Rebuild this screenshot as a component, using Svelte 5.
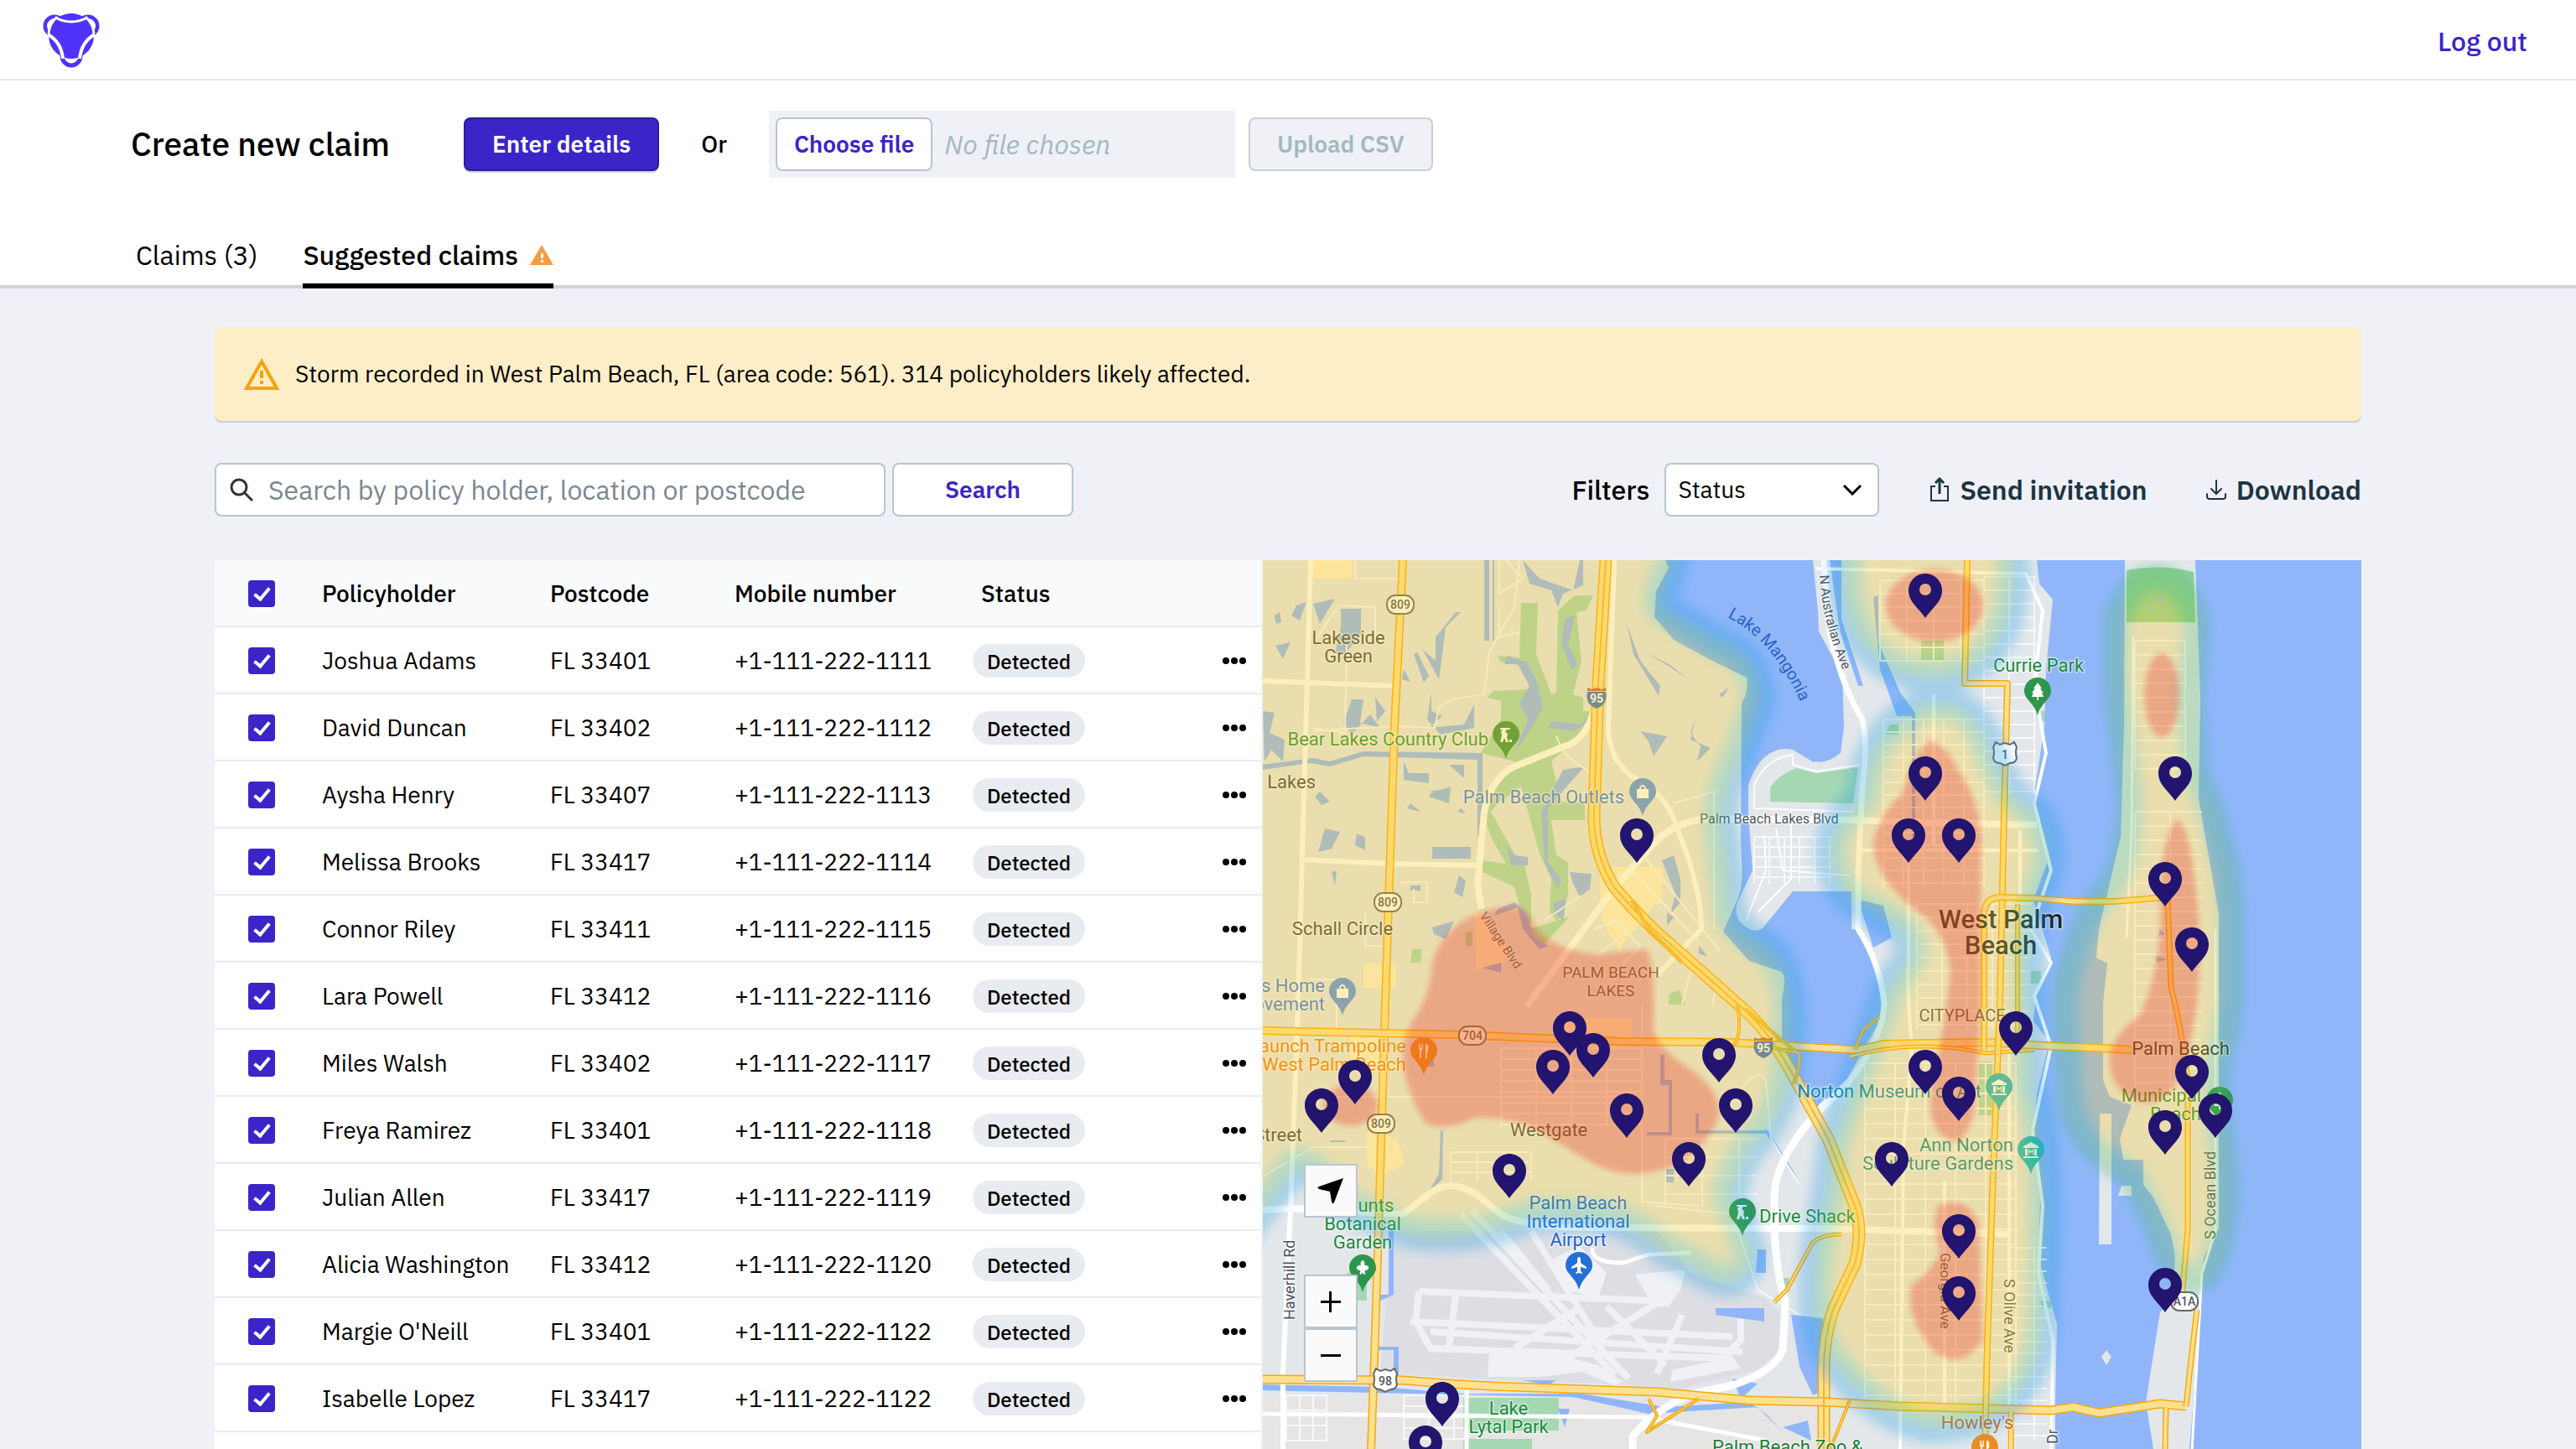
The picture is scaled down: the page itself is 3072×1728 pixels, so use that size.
<script>
  const names = [
    ["Joshua Adams", "FL 33401", "+1-111-222-1111"],
    ["David Duncan", "FL 33402", "+1-111-222-1112"],
    ["Aysha Henry", "FL 33407", "+1-111-222-1113"],
    ["Melissa Brooks", "FL 33417", "+1-111-222-1114"],
    ["Connor Riley", "FL 33411", "+1-111-222-1115"],
    ["Lara Powell", "FL 33412", "+1-111-222-1116"],
    ["Miles Walsh", "FL 33402", "+1-111-222-1117"],
    ["Freya Ramirez", "FL 33401", "+1-111-222-1118"],
    ["Julian Allen", "FL 33417", "+1-111-222-1119"],
    ["Alicia Washington", "FL 33412", "+1-111-222-1120"],
    ["Margie O'Neill", "FL 33401", "+1-111-222-1122"],
    ["Isabelle Lopez", "FL 33417", "+1-111-222-1122"],
  ];

  let rows = $state(
    names.map(([name, postcode, mobile]) => ({ name, postcode, mobile, checked: true }))
  );
  let allChecked = $derived(rows.every((row) => row.checked));
  let query = $state("");

  function toggleAll() {
    const next = !allChecked;
    rows.forEach((row) => (row.checked = next));
  }

  // policyholder pins: centre x, top y
  const pins = [
    [446, 308], [790, 16], [790, 234], [770, 308], [830, 308], [1088, 234],
    [1076, 360], [1108, 438], [366, 538], [394, 564], [346, 584], [544, 570],
    [564, 630], [434, 636], [508, 694], [294, 708], [110, 596], [70, 630],
    [214, 980], [194, 1032], [898, 538], [790, 584], [830, 616], [750, 694],
    [830, 780], [830, 854], [1108, 590], [1136, 636], [1076, 656], [1076, 844],
  ];

  // places of interest: centre x, top y, colour, glyph
  const places = [
    [290, 192, "#34913f", "golf"],
    [453, 260, "#5a92e8", "bag"],
    [95, 498, "#5a92e8", "bag"],
    [192, 569, "#f08c1d", "food"],
    [924, 140, "#2e964a", "tree"],
    [572, 761, "#2e964a", "golf"],
    [878, 612, "#1fb5c4", "museum"],
    [916, 687, "#1fb5c4", "museum"],
    [119, 828, "#2e964a", "flower"],
    [377, 825, "#256fd8", "plane"],
    [1141, 628, "#2e964a", "tree"],
    [861, 1042, "#f08c1d", "food"],
  ];

  const glyphs = {
    golf: "M9 8h12v2h-4l-2 2 3 4-1 3 2 6h-3l-2-5-2 5H9l2-8-1-5 2-2H9zM20 22h3v3h-3z",
    bag: "M9 13h14v11H9zM12 13a4 5 0 0 1 8 0h-2a2 3 0 0 0-4 0zM13 17h1a2 2 0 0 0 4 0h1a3 3 0 0 1-6 0z",
    food: "M10 8h1v5h1V8h1v5h1V8h1v6l-2 2v9h-2v-9l-1-2zM18 8c3 0 4 3 3 9h-1v8h-2z",
    tree: "M16 6l5 7h-2l4 5h-2l2 5h-6v4h-2v-4H9l2-5H9l4-5h-2z",
    museum: "M16 7l9 5v2H7v-2zM9 15h3v8H9zM20 15h3v8h-3zM7 24h18v2H7zM13 22v-7l3 3 3-3v7h-1v-4l-2 2-2-2v4z",
    flower: "M16 7a3 4 0 0 1 2 6 4 3 0 0 1 4 5 4 3 0 0 1-4 1 3 4 0 0 1 1 5 3 4 0 0 1-3-3 3 4 0 0 1-3 3 3 4 0 0 1 1-5 4 3 0 0 1-4-1 4 3 0 0 1 4-5 3 4 0 0 1 2-6z",
    plane: "M16 6c1 0 2 1 2 3v4l7 5v2l-7-2v5l2 2v1l-4-1-4 1v-1l2-2v-5l-7 2v-2l7-5V9c0-2 1-3 2-3z",
  };

  // place names: lines, anchor x, first baseline, anchor, colour, size
  const labels = [
    [["Lakeside", "Green"], 102, 100, "middle", "#3f454b", 22],
    [["Bear Lakes Country Club"], 269, 221, "end", "#27903a", 22],
    [["s Lakes"], 63, 272, "end", "#3f454b", 22],
    [["Palm Beach Outlets"], 431, 290, "end", "#3a7be0", 22],
    [["Palm Beach Lakes Blvd"], 521, 314, "start", "#50565c", 16],
    [["Schall Circle"], 95, 447, "middle", "#3f454b", 22],
    [["PALM BEACH", "LAKES"], 415, 498, "middle", "#5a5652", 19],
    [["s Home", "ovement"], 74, 515, "end", "#3a7be0", 22],
    [["aunch Trampoline", "West Palm Beach"], 171, 587, "end", "#ee7c12", 22],
    [["Westgate"], 341, 687, "middle", "#3f454b", 22],
    [["Street"], 47, 693, "end", "#3f454b", 22],
    [["Mounts", "Botanical", "Garden"], 119, 777, "middle", "#208a3d", 22],
    [["Palm Beach", "International", "Airport"], 376, 774, "middle", "#1f62d6", 22],
    [["Drive Shack"], 592, 790, "start", "#208a3d", 22],
    [["Lake", "Lytal Park"], 293, 1019, "middle", "#208a3d", 22],
    [["Palm Beach Zoo &"], 536, 1065, "start", "#188038", 22],
    [["Currie Park"], 925, 133, "middle", "#208a3d", 22],
    [["CITYPLACE"], 834, 550, "middle", "#50504a", 20],
    [["Norton Museum of Art"], 857, 641, "end", "#1086ae", 22],
    [["Ann Norton", "Sculpture Gardens"], 895, 705, "end", "#10889a", 22],
    [["Palm Beach"], 1153, 590, "end", "#25292d", 22],
    [["Municipal", "Beach"], 1119, 646, "end", "#208a3d", 22],
    [["Howley's"], 852, 1036, "middle", "#d96a18", 22],
  ];

  const cityLabel = ["West Palm", "Beach"];

  // street names that run along their road
  const streets = [
    ["Haverhill Rd", 38, 906, -90, 18],
    ["Village Blvd", 258, 424, 56, 15],
    ["S Ocean Blvd", 1136, 810, -90, 18],
    ["Georgia Ave", 808, 826, 90, 17],
    ["S Olive Ave", 884, 857, 90, 18],
    ["Dr", 948, 1054, -90, 18],
  ];

  const ovals = [
    ["809", 164, 54], ["809", 149, 409], ["809", 141, 673], ["704", 250, 568], ["A1A", 1099, 885],
  ];
  const crests = [["1", 885, 231], ["98", 146, 978]];
  const interstates = [[398, 164], [597, 581]];

  // yellow highways: path and width
  const highways = [
    ["M167 0 157 199 146 529 139 763 133 952 129 1062", 10],
    ["M409 0 400 147 395 302Q394 350 419 390 440 415 470 444L566 529Q600 556 630 610L674 690 706 770Q716 800 706 839L680 894Q668 930 669 970V1062", 15],
    ["M0 561 233 566 428 574 558 575 674 582 710 584 741 577 862 575 932 579 1001 582 1036 584", 10],
    ["M700 592Q780 570 862 588L920 584", 5],
    ["M0 977 167 978Q240 984 298 986L471 992 580 1002 674 1004 758 1009 940 1014 966 1010 997 1017 1070 1006 1101 1009", 11],
    ["M840 0 837 147H888L884 302 879 529 871 729 864 935 861 1062", 8],
    ["M860 584V420Q862 402 880 402L919 403 966 407 1014 407 1077 402", 8],
    ["M900 410V584", 6],
    ["M1079 405 1083 509Q1096 560 1103 620L1103 797 1096 880", 7],
    ["M1114 894 1107 952 1101 1009M1077 1011 1076 1062", 7],
    ["M892 1015V1062", 7],
    ["M610 885 625 870 655 815Q665 804 690 804", 5],
    ["M566 529Q572 570 560 580M575 535 640 590Q640 610 632 625M600 580 640 588", 4],
    ["M460 1000 470 1020 458 1040 520 1000M700 1002 676 1062M706 584 716 560 735 545M440 405 460 440 500 480", 4],
  ];

  const avenues = [
    ["M57 0 42 529 33 773 24 970V1062", 6],
    ["M0 144 157 150M46 357 150 362 258 364", 6],
    ["M395 178Q385 215 360 222L300 246Q272 260 264 300L256 388 261 416", 8],
    ["M315 532 419 391 471 333Q490 315 523 309H674L760 312 923 316", 8],
    ["M419 0 412 199Q412 236 440 258 484 280 494 320 523 390 523 440L471 494", 6],
    ["M0 775 33 773 167 780 198 756Q222 736 254 756L284 780Q310 796 400 796L610 797H674L888 804", 8],
    ["M674 645Q610 710 610 760V797Q612 850 623 884L620 942Q610 968 560 984L514 994Q470 1010 441 1045V1062", 9],
    ["M669 0 676 85Q690 150 715 190 722 220 715 268L710 371V440Q736 480 741 529 740 570 697 625L654 667", 7],
    ["M0 1018 454 1022 600 1050M243 990V1062", 5],
    ["M393 820Q390 838 430 838L460 828 510 826", 5],
    ["M770 360V480Q768 520 774 580L764 700 760 1062M813 740V1010M890 540V1062", 4],
    ["M800 160V340M710 346H925M903 322V402", 4],
    ["M660 10 860 15 910 16 930 60 920 150 934 230 920 290 940 370 916 440 940 480 920 520 940 580 918 680 930 770 925 850 942 930 940 1062", 4],
    ["M1136 440V800L1120 850 1108 1062M1038 90 1036 320 1030 450", 3],
  ];

  // thin residential streets, drawn as evenly spaced runs
  function grid(x1, x2, y1, y2, dx, dy) {
    let d = "";
    for (let y = y1; y <= y2; y += dy) d += `M${x1} ${y}H${x2}`;
    for (let x = x1; x <= x2; x += dx) d += `M${x} ${y1}V${y2}`;
    return d;
  }
  const lanes = [
    grid(284, 452, 582, 676, 42, 13),
    grid(224, 320, 706, 740, 32, 12),
    grid(480, 590, 690, 770, 44, 22),
    grid(736, 860, 24, 120, 32, 16),
    grid(740, 860, 190, 390, 24, 15),
    grid(780, 915, 410, 560, 30, 16),
    grid(718, 900, 600, 1010, 36, 18),
    grid(860, 922, 20, 280, 30, 16),
    grid(1040, 1100, 96, 250, 60, 17),
    grid(1040, 1120, 300, 640, 42, 17),
    grid(890, 935, 820, 1050, 30, 14),
    grid(168, 243, 996, 1050, 30, 13),
    grid(28, 76, 996, 1050, 16, 18),
    grid(586, 680, 330, 386, 18, 12),
    "M60 100 90 54 134 56V96M110 0V22H166M282 0V40L310 22 290 0M282 55V92L306 86M60 200 98 206 100 100M60 204Q160 196 205 200L210 176 225 166 264 160 270 110 300 56 306 0",
    "M164 384H196V408H180V392M122 420V460H142M55 500H88V560M335 430 350 420 380 400M395 440 420 430 450 460 430 480M400 470 440 440",
    "M350 210Q360 240 395 254M440 370 520 455M452 350 545 466M490 290 538 276V440M500 530 510 490 540 510 536 532M555 650Q590 600 600 620L606 690 640 745",
    "M452 530V765L520 770M90 640H440M60 700H130M0 735 60 700M470 770 560 780 590 870 640 900",
  ];

  // small lakes and canals inland
  const ponds = [
    "M93 58H117V88L98 112H86L93 80zM40 54 52 50 44 72 34 66zM15 102 33 98 24 118zM60 52 86 46 68 76zM14 66 20 62 22 74 16 76z",
    "M230 62 206 92V120L190 106 210 142 214 112 218 80 236 62zM180 112 192 146 198 138 184 110zM166 142 176 145 168 130z",
    "M106 166H120L116 194 140 200 128 184 106 208 96 194zM134 164 146 180 136 192zM201 158V180L214 186 198 200 240 196 252 172V200L212 208 196 190z",
    "M0 180 14 182 8 206 26 214 24 240 10 226 2 240zM168 240 174 254H198V266L168 262zM222 244H240V260zM200 278 224 270 222 290 198 282zM176 290 188 300 172 296z",
    "M0 244 60 236 80 240 120 228 262 230V330H256V238L120 234 80 246 56 242 0 250z",
    "M310 0 330 22 370 36 378 0H382V30L358 40 352 56 344 36 318 28zM270 0V96H264V0zM276 0V96H274V0z",
    "M292 114 316 122 328 148 334 176 320 200 300 230 316 190 306 170 318 150 304 124 288 124z",
    "M360 70 372 66 364 100 376 126 368 130 356 100zM346 192 380 196 392 180 396 190 370 204 340 200z",
    "M391 190H396V290H391zM358 250 384 246 366 266 340 296 340 360 356 380 352 392 336 360 332 300zM290 340 300 352 316 354V364H296z",
    "M434 76 450 120 474 150 472 162 442 112zM456 110 480 124 508 142 484 124zM450 204 482 210 466 234 460 216zM516 188 510 214 534 224 518 240 522 222 510 206zM544 160 556 152 548 164z",
    "M202 342H248V356H202zM74 320 92 324 82 344 66 348zM112 326 122 330V346L110 340zM82 372 88 370 86 388zM62 282 68 276 80 288 70 292z",
    "M176 388H188V394H176zM234 376 242 382 238 402 228 396zM202 438 228 430 218 452 204 446zM232 300 242 302 236 296zM198 276 222 272V288L208 278z",
    "M476 358 490 352 498 380V408L486 422 492 398zM482 420 490 426 482 436zM520 460 530 472 520 470zM366 372 392 374 390 392 378 402 370 386z",
    "M280 416 300 408 314 420 324 450 340 460 330 464 310 440 304 414 276 424zM262 486 284 480V492zM346 408 362 404 358 430 348 420z",
    "M195 590H204V604H195zM474 590H479V620H488V686H458V682H484V626H474zM516 660H520V680H602L640 740 600 684H516zM80 692H98V694H80zM502 722H524V730H502zM480 726H490V742H480zM215 680 214 738 196 756 210 732 212 680z",
    "M540 892H598V908L540 900zM590 822H600V850H588zM135 938H162V976H156V942H135zM150 800H156V876L138 884V876H150zM630 900 668 904V990L656 996 640 962zM310 978 350 978 340 984zM352 1012H366L360 1034zM560 976 590 982 570 1000zM620 1034 650 1026 654 1050z",
    "M0 983 140 986 240 994 380 994 480 1010 580 1004 600 1018 620 1040 590 1010 460 1018 370 998 0 990z",
    "M1070 440 1076 446 1068 448zM1066 472 1078 476 1066 480zM1062 46 1074 44 1070 50zM1056 52 1064 60 1058 58zM728 44 734 42V98L760 158 778 182V330H774V186H756L736 130zM676 0H690V70L716 150H710L688 84z",
  ];

  const parks = [
    "M308 51H328L326 112 344 160 350 158 352 60 372 42H394L386 60 374 62 380 120 370 160 382 164V180H396L380 208 344 240 356 288 384 290V310H344L350 352 364 360V400L352 432 342 420 344 380 330 350 308 270 280 290 272 300 300 350 312 362 320 400V434L308 420 300 390 262 372V358L290 362 272 330 262 300 276 270 300 240 260 230 284 190V168L268 164 274 156 318 154 312 126 284 122 280 114 306 116z",
    "M318 440 366 425 330 464 312 440zM178 464H190L188 480H176zM242 443H250V460H242zM484 518 496 512 504 530H484z",
    "M605 288V272Q612 258 636 248L660 254 710 247 704 290z",
    "M748 196H758V208H742zM785 96H812V119H785zM922 180H934V192L926 194zM916 490H928V505H916z",
    "M239 999H353V1038H239zM239 1048H321V1062H239zM100 850H124V883H100zM620 856H628V872H620z",
    "M1053 984H1101L1098 1008H1050zM980 1022 1000 1020 1008 1062H990zM1012 1032 1024 1062H1018zM1000 568H1008V640H1000zM1002 568H1036V576H1002zM854 598H870V662H854zM928 883H940V892H928z",
  ];

  // storm footprint: core outline, outer halo width, inner halo width
  const heat = [
    ["M-40-30H478L455 37Q448 62 474 80L536 117Q576 130 570 171L546 233Q516 290 530 350L538 430Q550 454 590 480 612 500 608 560 610 640 576 675 544 710 536 760L560 826Q560 842 548 838L490 806Q440 762 384 762 330 758 300 768 240 792 180 782L111 752 72 712Q40 690 20 712L-40 790z", 80, 44],
    ["M714-30H874V20Q870 118 797 119 722 112 714 30z", 80, 40],
    ["M797 190Q832 186 846 224 866 290 905 312 930 345 904 400 890 430 894 529L897 630Q916 700 914 797L910 918Q900 1010 797 1014 740 1004 689 936 664 880 692 763L700 694 762 522 790 480Q800 450 768 420L716 392Q680 350 710 316 738 290 736 270 744 214 797 190z", 78, 36],
    ["M1066 36Q1094 44 1098 80L1090 160 1096 261Q1114 290 1122 330 1140 380 1138 440V529L1120 620 1128 700Q1140 800 1112 842 1094 836 1086 800L1050 722Q984 690 979 643L972 529Q980 450 1030 388 1056 340 1046 250L1034 147V70Q1046 40 1066 36z", 56, 60],
  ];

  const hotspots = [
    "M298 412Q318 416 324 436 346 466 400 470L456 464Q468 470 466 560 470 580 500 600 560 640 538 676 510 730 440 732 410 730 384 714L341 688Q310 664 254 665 218 682 194 672 150 600 178 550 200 520 202 480 220 420 298 412z",
    "M72 652A32 24 0 1 0 137 648 32 24 0 1 0 72 652z",
    "M743 54A58 43 0 1 0 859 54 58 43 0 1 0 743 54z",
    "M797 216Q816 222 827 247 864 300 856 360V529L848 660Q836 700 820 692 790 680 798 630 812 560 820 491 816 450 790 426 726 380 728 336 736 300 762 280 776 224 797 216z",
    "M805 770Q840 756 854 790L858 930Q834 968 800 944 764 900 774 864 796 850 808 825 796 790 805 770z",
    "M1051 161A21 50 0 1 0 1093 161 21 50 0 1 0 1051 161z",
    "M1091 309Q1108 320 1116 430 1122 520 1100 600 1080 660 1040 644 1008 630 1010 590 1014 566 1046 543 1074 480 1070 400 1074 320 1091 309z",
  ];
</script>

<div class="page">
  <header class="topbar">
    <a class="brand" href="/" aria-label="Home">
      <svg viewBox="0 0 68 66" aria-hidden="true">
        <g fill="none" stroke="#4f33fb" stroke-width="5">
          <circle cx="14" cy="15" r="11" />
          <circle cx="54" cy="15" r="11" />
          <circle cx="34" cy="51" r="11" />
        </g>
        <circle cx="14" cy="15" r="9" fill="#fff" />
        <circle cx="54" cy="15" r="9" fill="#fff" />
        <path
          d="M34 0C44 0 52 5 56 12 61 20 62 30 59 37 55 47 45 54 34 54S13 47 9 37C6 30 7 20 12 12 16 5 24 0 34 0z"
          fill="#4f33fb"
        />
        <g fill="none" stroke="#fff" stroke-width="4">
          <path d="M15 5Q34 15 53 5" stroke-width="3" />
          <path d="M6 25Q22 34 24 54" />
          <path d="M62 25Q46 34 44 54" />
          <path d="M17 4Q8 12 7 24M51 4Q60 12 61 24" stroke-width="3" />
        </g>
      </svg>
    </a>
    <a class="logout" href="/logout">Log out</a>
  </header>

  <section class="create">
    <h1>Create new claim</h1>
    <button class="btn primary">Enter details</button>
    <span class="or">Or</span>
    <div class="file">
      <input id="csv" class="sr-only" type="file" accept=".csv" />
      <label class="btn" for="csv">Choose file</label>
      <span class="file-name">No file chosen</span>
    </div>
    <button class="btn upload" disabled>Upload CSV</button>
  </section>

  <nav class="tabs">
    <a href="#claims">Claims (3)</a>
    <a class="active" href="#suggested" aria-current="page">
      Suggested claims
      <svg viewBox="0 0 28 24" aria-hidden="true">
        <path d="M14 0 28 24H0z" fill="#f59b42" />
        <path d="M13 10h3v6h-3zM13 18h3v3h-3z" fill="#fff" />
      </svg>
    </a>
  </nav>

  <main>
    <div class="banner" role="status">
      <svg viewBox="0 0 44 38" aria-hidden="true">
        <path d="M22 4 40 36H4z" fill="none" stroke="#f5a30c" stroke-width="4" />
        <path d="M20 15h4v9h-4zM20 27h4v4h-4z" fill="#f5a30c" />
      </svg>
      <p>Storm recorded in West Palm Beach, FL (area code: 561). 314 policyholders likely affected.</p>
    </div>

    <div class="toolbar">
      <form class="search" onsubmit={(e) => e.preventDefault()}>
        <div class="search-box">
          <svg viewBox="0 0 28 28" aria-hidden="true">
            <circle cx="11" cy="11" r="9" fill="none" stroke="#333" stroke-width="3" />
            <path d="m18 18 9 9" stroke="#333" stroke-width="3" />
          </svg>
          <input
            type="text"
            aria-label="Search"
            placeholder="Search by policy holder, location or postcode"
            bind:value={query}
          />
        </div>
        <button class="btn">Search</button>
      </form>

      <div class="actions">
        <label for="status">Filters</label>
        <div class="select">
          <select id="status">
            <option>Status</option>
            <option>Detected</option>
          </select>
          <svg viewBox="0 0 24 14" aria-hidden="true">
            <path d="m2 2 10 10L22 2" fill="none" stroke="#000" stroke-width="3" />
          </svg>
        </div>
        <button class="link">
          <svg viewBox="0 0 24 30" aria-hidden="true">
            <g fill="none" stroke="#1d3444" stroke-width="2">
              <path d="M7 11H2v17h20V11h-5" />
              <path d="M12 20V3M7 7l5-5 5 5" stroke-width="3" />
            </g>
          </svg>
          Send invitation
        </button>
        <button class="link">
          <svg viewBox="0 0 24 30" aria-hidden="true">
            <g fill="none" stroke="#1d3444" stroke-width="2" stroke-linecap="round">
              <path d="M1 20v3q0 3 3 3h16q3 0 3-3v-3" />
              <path d="M12 4v16M6 14l6 6 6-6" />
            </g>
          </svg>
          Download
        </button>
      </div>
    </div>

    <div class="workspace">
      <div class="list">
        <table>
          <colgroup>
            <col class="c-check" />
            <col class="c-name" />
            <col class="c-post" />
            <col class="c-mobile" />
            <col />
            <col class="c-menu" />
          </colgroup>
          <thead>
            <tr>
              <th class="check">
                <input type="checkbox" aria-label="Select all" checked={allChecked} onchange={toggleAll} />
              </th>
              <th>Policyholder</th>
              <th>Postcode</th>
              <th>Mobile number</th>
              <th class="status">Status</th>
              <th></th>
            </tr>
          </thead>
          <tbody>
            {#each rows as row}
              <tr>
                <td class="check">
                  <input type="checkbox" aria-label={row.name} bind:checked={row.checked} />
                </td>
                <td>{row.name}</td>
                <td>{row.postcode}</td>
                <td>{row.mobile}</td>
                <td><span class="pill">Detected</span></td>
                <td>
                  <button class="more" aria-label="More actions">
                    <svg viewBox="0 0 28 8" aria-hidden="true">
                      <circle cx="4" cy="4" r="4" /><circle cx="14" cy="4" r="4" /><circle cx="24" cy="4" r="4" />
                    </svg>
                  </button>
                </td>
              </tr>
            {/each}
          </tbody>
        </table>
      </div>

      <div class="map">
        <svg class="canvas" viewBox="0 0 1310 1060" preserveAspectRatio="xMinYMin slice">
          <defs>
            <filter id="soft" x="-20%" y="-20%" width="140%" height="140%">
              <feGaussianBlur stdDeviation="7" />
            </filter>
            <filter id="edge" x="-20%" y="-20%" width="140%" height="140%">
              <feGaussianBlur stdDeviation="3" />
            </filter>
            <path id="mangonia" d="M554 68Q614 98 648 186" />
            <path id="australian" d="M664 18Q667 80 700 150" />
          </defs>

          <rect width="1310" height="1060" fill="#e3e7ea" />
          <path d="M0 1000H680V1060H0z" fill="#e6e5e4" />
          <path
            d="M154 800H400L470 800 510 850 601 880 618 900 616 942 590 965 500 988 428 983 300 978 140 970z"
            fill="#dddee3"
          />

          <!-- airport runways and aprons -->
          <g fill="none" stroke="#f0f1f4" stroke-width="8">
            <path d="M176 908 560 926M186 872 484 884M186 872 182 908 200 940 560 952M200 920 572 944" />
            <path d="M236 780 420 972M250 776 300 830 436 976M284 800 340 870M320 800 400 930" />
            <path d="M350 960 480 880M300 940 380 890M470 970 500 900M540 960 570 930V905M230 876 222 940M410 890 480 960" />
          </g>
          <g fill="#f0f1f4">
            <path d="M340 836 378 818 410 850 400 880 360 870zM444 852 504 846 498 870 484 890H466zM270 944H340L400 960 430 980 420 984 380 968 330 974H268zM488 966 560 950 570 964 486 980z" />
          </g>

          <g fill="#fdf1cf">
            <path d="M403 366H477L476 410 440 410 426 470 402 410zM120 481H160L158 510H120z" />
            <path d="M404 370H476V400L424 464 404 430zM104 560H150V605H104zM124 680 160 690 170 720 140 735 124 720zM60 0H106V22H60z" />
            <path d="M358 546H440V580H358zM253 418 290 460V480L254 488zM1010 412H1044L1036 438H1004z" />
          </g>

          {#each parks as d}
            <path {d} fill="#a5d7b3" />
          {/each}

          <!-- Lake Mangonia and Clear Lake -->
          <path
            class="water"
            d="M480 0H656L662 61 663 85 691 137 693 199 689 230Q680 244 658 240L700 300 702 395V440L708 440 726 474 741 529 732 556 697 618 654 660 632 625 619 580V522Q625 500 619 491L580 478 549 443 566 405Q574 390 570 340L571 171Q580 155 577 140L536 120 490 95 467 68 469 37 484 9z"
          />
          <path
            d="M579 302V268Q588 242 601 233 616 222 632 226L655 240Q672 244 689 230L700 224 716 250 712 395H632L595 440Q582 446 568 430 562 420 566 408L584 370z"
            fill="#e3e7ea"
          />
          <path d="M605 288V272Q612 258 636 248L660 254 710 247 704 290z" fill="#a5d7b3" />
          <path
            d="M586 296V268Q600 236 632 232V244L660 252 712 244M586 296 705 300M598 328 600 370 576 430M612 320 620 370 700 376M630 296V380L590 420"
            fill="none"
            stroke="#fff"
            stroke-width="2"
          />
          <path class="water" d="M710 405 740 412 750 450 728 462z" />

          <!-- Lake Worth lagoon and the ocean -->
          <path
            class="water"
            d="M923 0 926 28 942 47 934 130 932 199 919 285 938 354 919 405 940 474 923 509 919 550 938 574 923 636 919 684 927 763 925 832 947 911 945 1004V1060H1310V0z"
          />
          <path
            d="M1028 0H1112L1118 164 1116 285 1140 422V797L1122 832 1114 952 1105 1060H1062L1053 1004 1070 897 1085 880 1088 830 1083 804 1062 760 1050 745V715H1026L1022 690 1036 650 1010 640 1002 620V529L1007 481 994 474 997 440 1023 330 1027 199z"
            fill="#e3e7ea"
          />
          <path d="M1030 12Q1072 4 1110 14L1112 74H1030z" fill="#90d196" />
          <path d="M998 660H1012V816H997zM1024 746H1036V758H1020zM1006 942 1012 950 1006 960 1000 950z" fill="#e3e7ea" />

          {#each ponds as d}
            <path class="water" {d} />
          {/each}

          {#each lanes as d}
            <path {d} fill="none" stroke="#f7f9fa" stroke-width="2" />
          {/each}
          {#each avenues as [d, width]}
            <path {d} fill="none" stroke="#fff" stroke-width={width} stroke-linejoin="round" />
          {/each}
          {#each highways as [d, width]}
            <path {d} fill="none" stroke="#f7a80d" stroke-width={width} stroke-linejoin="round" />
            <path {d} fill="none" stroke="#ffe08f" stroke-width={width - 3} stroke-linejoin="round" />
          {/each}
          <path d={highways[1][0]} fill="none" stroke="#f9b52e" stroke-width="2" />

          {#each ovals as [text, x, y]}
            <rect x={x - 16} y={y - 12} width="32" height="22" rx="10" fill="#fff" stroke="#666" stroke-width="2" />
            <text class="shield" {x} y={y + 4}>{text}</text>
          {/each}
          {#each crests as [text, x, y]}
            <path
              transform="translate({x - 14} {y - 14})"
              d="M3 0 8 3 14 1 20 3 25 0 28 6Q26 12 28 19 27 25 20 25L14 28 8 25Q1 25 0 19 2 12 0 6z"
              fill="#fff"
              stroke="#666"
              stroke-width="2"
            />
            <text class="shield" {x} y={y + 6}>{text}</text>
          {/each}
          {#each interstates as [x, y]}
            <path transform="translate({x - 12} {y - 12})" d="M1 5H23Q26 20 12 25-2 20 1 5z" fill="#3d70bb" />
            <path transform="translate({x - 12} {y - 12})" d="M1 0 6 2 12 0 18 2 23 0V4H1z" fill="#d9593f" />
            <text class="shield light" {x} y={y + 6}>95</text>
          {/each}

          {#each places as [x, y, color, glyph]}
            <g transform="translate({x - 16} {y})">
              <path d="M16 0C25 0 32 7 32 16 32 26 20 30 16 45 12 30 0 26 0 16 0 7 7 0 16 0z" fill={color} />
              <path d={glyphs[glyph]} fill="#fff" />
            </g>
          {/each}

          {#each labels as [lines, x, y, anchor, color, size]}
            <text class="label" text-anchor={anchor} fill={color} font-size={size}>
              {#each lines as line, i}
                <tspan {x} y={y + i * 22}>{line}</tspan>
              {/each}
            </text>
          {/each}
          <text class="label city" text-anchor="middle">
            {#each cityLabel as line, i}
              <tspan x="880" y={439 + i * 31}>{line}</tspan>
            {/each}
          </text>
          {#each streets as [text, x, y, angle, size]}
            <text class="label" font-size={size} fill="#50565c" transform="translate({x} {y}) rotate({angle})">{text}</text>
          {/each}
          <text class="label lake"><textPath href="#mangonia">Lake Mangonia</textPath></text>
          <text class="label" font-size="16" fill="#50565c"><textPath href="#australian">N Australian Ave</textPath></text>

          <!-- storm intensity -->
          <g opacity="0.3" stroke-linejoin="round">
            <g filter="url(#soft)">
              {#each heat as [d, outer]}
                <path {d} fill="#1b9be6" stroke="#1b9be6" stroke-width={outer} />
              {/each}
            </g>
            <g filter="url(#soft)">
              {#each heat as [d, , inner]}
                <path {d} fill="#5ebe5f" stroke="#5ebe5f" stroke-width={inner} />
              {/each}
            </g>
            <g filter="url(#soft)">
              {#each heat as [d]}
                <path {d} fill="#fbcb28" />
              {/each}
            </g>
          </g>
          <g opacity="0.26" filter="url(#edge)">
            {#each hotspots as d}
              <path {d} fill="#eb1010" />
            {/each}
          </g>

          {#each pins as [x, y]}
            <path
              transform="translate({x - 20} {y})"
              d="M20 0C31 0 40 9 40 20 40 34 28 41 20 53 12 41 0 34 0 20 0 9 9 0 20 0zM20 12a7 7 0 1 0 0 14 7 7 0 0 0 0-14z"
              fill="#22146f"
            />
          {/each}
        </svg>

        <div class="controls">
          <button aria-label="Locate me">
            <svg viewBox="0 0 32 32" aria-hidden="true"><path d="M31 1 20 30Q18 33 17 29L15 17 2 14Q-1 12 2 11z" /></svg>
          </button>
          <div class="zoom">
            <button aria-label="Zoom in">
              <svg viewBox="0 0 32 32" aria-hidden="true"><path d="M14 4h3v11h11v3H17v11h-3V18H4v-3h10z" /></svg>
            </button>
            <button aria-label="Zoom out">
              <svg viewBox="0 0 32 32" aria-hidden="true"><path d="M4 15h24v3H4z" /></svg>
            </button>
          </div>
        </div>
      </div>
    </div>
  </main>
</div>

<style>
  :global(body) {
    margin: 0;
    background: #eff1f6;
  }

  .page {
    display: flex;
    flex-direction: column;
    min-height: 100vh;
    font-family: "IBM Plex Sans", Inter, "Noto Sans", sans-serif;
    font-size: 28px;
    line-height: 40px;
    color: #000;
  }

  a {
    color: inherit;
    text-decoration: none;
  }

  .topbar {
    display: flex;
    align-items: center;
    justify-content: space-between;
    box-sizing: border-box;
    height: 96px;
    padding: 4px 58px 0 51px;
    background: #fff;
    border-bottom: 2px solid #e6e6e6;
  }

  .brand svg {
    display: block;
    width: 68px;
    height: 66px;
  }

  .logout {
    font-size: 32px;
    font-weight: 500;
    color: #3b25c8;
  }

  .create {
    display: flex;
    align-items: center;
    padding: 36px 156px;
    background: #fff;
  }

  h1 {
    margin: 0 88px 0 0;
    font-size: 39px;
    font-weight: 500;
  }

  .btn {
    box-sizing: border-box;
    height: 64px;
    padding: 0 32px;
    border: 2px solid #b9c5cf;
    border-radius: 8px;
    background: #fff;
    color: #3b25c8;
    font: inherit;
    font-weight: 600;
    line-height: 60px;
    text-align: center;
    white-space: nowrap;
  }

  .primary {
    background: #3b25c8;
    border-color: #2c1f8f;
    box-shadow: 0 2px 0 #cfd6df;
    color: #fff;
  }

  .or {
    margin: 0 50px;
    font-weight: 500;
  }

  .file {
    display: flex;
    align-items: center;
    gap: 14px;
    box-sizing: border-box;
    width: 556px;
    height: 80px;
    padding: 0 8px;
    margin-right: 16px;
    background: #eff1f6;
  }

  .file .btn {
    padding: 0 20px;
  }

  .file-name {
    font-size: 32px;
    font-style: italic;
    color: #a3b8c1;
  }

  .upload {
    background: #eff1f6;
    border-color: #c9ced3;
    color: #a3b8c1;
  }

  .sr-only {
    position: absolute;
    width: 1px;
    height: 1px;
    opacity: 0;
  }

  .tabs {
    display: flex;
    gap: 54px;
    height: 92px;
    padding: 0 162px;
    background: #fff;
    border-bottom: 4px solid #cbd3da;
    font-size: 32px;
  }

  .tabs a {
    display: flex;
    align-items: center;
    gap: 14px;
    height: 68px;
    padding-top: 22px;
    border-bottom: 6px solid transparent;
  }

  .tabs .active {
    border-color: #000;
    font-weight: 500;
  }

  .tabs svg {
    width: 28px;
    height: 24px;
  }

  main {
    display: flex;
    flex: 1;
    flex-direction: column;
    padding: 46px 256px 0;
    background: #eff1f6;
  }

  .banner {
    display: flex;
    align-items: center;
    gap: 18px;
    height: 112px;
    padding: 0 34px;
    border-radius: 8px;
    background: #feeec7;
    box-shadow: 0 2px 0 #c9cdd0;
  }

  .banner svg {
    width: 44px;
    height: 38px;
  }

  .banner p {
    margin: 0;
  }

  .toolbar {
    display: flex;
    align-items: center;
    justify-content: space-between;
    padding: 50px 0 52px;
  }

  .search {
    display: flex;
    gap: 8px;
  }

  .search .btn {
    width: 216px;
  }

  .search-box {
    display: flex;
    align-items: center;
    gap: 18px;
    box-sizing: border-box;
    width: 800px;
    height: 64px;
    padding: 0 16px;
    border: 2px solid #b9c5cf;
    border-radius: 8px;
    background: #fff;
  }

  .search-box svg {
    flex: none;
    width: 28px;
    height: 28px;
  }

  .search-box input {
    flex: 1;
    min-width: 0;
    padding: 0;
    border: 0;
    outline: 0;
    font: inherit;
    font-size: 32px;
  }

  .search-box input::placeholder {
    color: #7b8794;
    opacity: 1;
  }

  .actions {
    display: flex;
    align-items: center;
    font-size: 32px;
    font-weight: 500;
  }

  .select {
    position: relative;
    margin: 0 60px 0 18px;
  }

  select {
    appearance: none;
    width: 256px;
    height: 64px;
    padding: 0 14px;
    border: 2px solid #b9c5cf;
    border-radius: 8px;
    background: #fff;
    color: #000;
    font: inherit;
    font-size: 28px;
    font-weight: 400;
  }

  .select svg {
    position: absolute;
    top: 25px;
    right: 20px;
    width: 24px;
    height: 14px;
    pointer-events: none;
  }

  .link {
    display: flex;
    align-items: center;
    gap: 12px;
    padding: 0;
    border: 0;
    background: none;
    color: #1d3444;
    font: inherit;
    font-weight: 600;
  }

  .link + .link {
    margin-left: 70px;
  }

  .link svg {
    width: 24px;
    height: 30px;
  }

  .workspace {
    display: grid;
    flex: 1;
    grid-template-columns: minmax(0, 1248fr) minmax(0, 1310fr);
    gap: 2px;
  }

  .list {
    background: #fff;
  }

  table {
    width: 100%;
    table-layout: fixed;
    border-collapse: separate;
    border-spacing: 0;
  }

  .c-check {
    width: 128px;
  }

  .c-name {
    width: 272px;
  }

  .c-post {
    width: 220px;
  }

  .c-mobile {
    width: 284px;
  }

  .c-menu {
    width: 64px;
  }

  th,
  td {
    box-sizing: border-box;
    height: 80px;
    padding: 2px 0 0;
    border-bottom: 2px solid #e8ebf0;
    text-align: left;
    font-weight: 400;
    white-space: nowrap;
  }

  th {
    background: #f9fafc;
    font-weight: 500;
  }

  .check {
    padding-left: 40px;
  }

  .status {
    padding-left: 10px;
  }

  input[type="checkbox"] {
    appearance: none;
    display: grid;
    place-items: center;
    width: 32px;
    height: 32px;
    margin: 0;
    border: 2px solid #3b25c8;
    border-radius: 4px;
    background: #fff;
  }

  input[type="checkbox"]:checked {
    background: #3b25c8;
  }

  input[type="checkbox"]:checked::before {
    content: "";
    width: 7px;
    height: 15px;
    margin-bottom: 4px;
    border: solid #fff;
    border-width: 0 4px 4px 0;
    rotate: 40deg;
  }

  .pill {
    display: block;
    box-sizing: border-box;
    width: 134px;
    height: 40px;
    border-radius: 20px;
    background: #e8ebf0;
    font-size: 24px;
    font-weight: 500;
    line-height: 42px;
    text-align: center;
  }

  .more {
    display: block;
    padding: 16px 18px;
    border: 0;
    background: none;
  }

  .more svg {
    display: block;
    width: 28px;
    height: 8px;
  }

  .map {
    position: relative;
    overflow: hidden;
    min-height: 640px;
    background: #90b6f9;
  }

  .canvas {
    position: absolute;
    inset: 0;
    width: 100%;
    height: 100%;
    font-family: Roboto, sans-serif;
  }

  .water {
    fill: #90b6f9;
  }

  .label {
    paint-order: stroke;
    stroke: #ffffff80;
    stroke-width: 3px;
    stroke-linejoin: round;
  }

  .city {
    fill: #1f252b;
    font-size: 31px;
    font-weight: 500;
  }

  .lake {
    fill: #2b62c9;
    stroke: none;
    font-size: 20px;
  }

  .shield {
    fill: #555;
    font-size: 14px;
    font-weight: 500;
    text-anchor: middle;
  }

  .light {
    fill: #fff;
    font-weight: 700;
  }

  .controls {
    position: absolute;
    bottom: 80px;
    left: 49px;
    display: flex;
    flex-direction: column;
    gap: 68px;
  }

  .controls button {
    display: grid;
    place-items: center;
    box-sizing: border-box;
    width: 64px;
    height: 64px;
    padding: 0;
    border: 2px solid #b9c5cf;
    background: #fafafa;
  }

  .controls svg {
    width: 32px;
    height: 32px;
  }
</style>
